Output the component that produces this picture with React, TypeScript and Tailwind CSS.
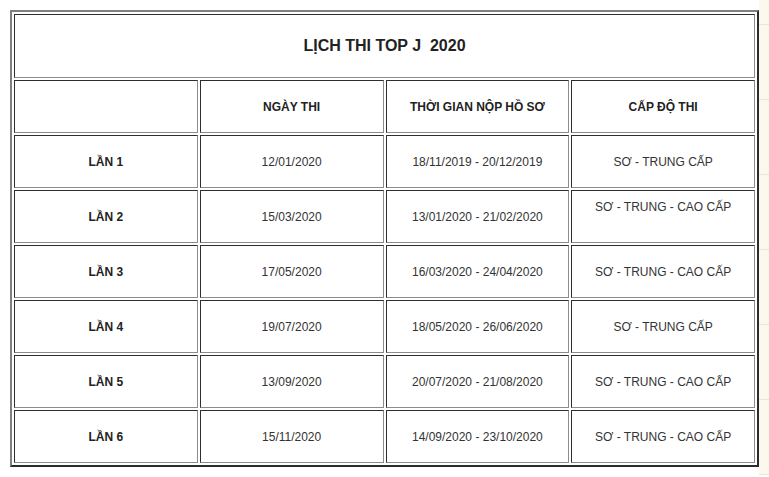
const rows = [
  { lan: "LẦN 1", ngay: "12/01/2020", hoso: "18/11/2019 - 20/12/2019", cap: "SƠ - TRUNG CẤP" },
  { lan: "LẦN 2", ngay: "15/03/2020", hoso: "13/01/2020 - 21/02/2020", cap: "SƠ - TRUNG - CAO CẤP", up: true },
  { lan: "LẦN 3", ngay: "17/05/2020", hoso: "16/03/2020 - 24/04/2020", cap: "SƠ - TRUNG - CAO CẤP" },
  { lan: "LẦN 4", ngay: "19/07/2020", hoso: "18/05/2020 - 26/06/2020", cap: "SƠ - TRUNG CẤP" },
  { lan: "LẦN 5", ngay: "13/09/2020", hoso: "20/07/2020 - 21/08/2020", cap: "SƠ - TRUNG - CAO CẤP" },
  { lan: "LẦN 6", ngay: "15/11/2020", hoso: "14/09/2020 - 23/10/2020", cap: "SƠ - TRUNG - CAO CẤP" },
];

const cell =
  "border border-t-[#2e2e2e] border-l-[#2e2e2e] border-b-[#8c8c8c] border-r-[#8c8c8c] text-center align-middle p-0";

export default function App() {
  return (
    <div
      className="flex w-[769px] h-[477px] bg-white text-[12px] text-[#333]"
      style={{ fontFamily: '"Liberation Sans", Arial, sans-serif' }}
    >
      <div className="flex-1 pl-[10px] pt-[10px]">
        <table className="w-[749px] table-fixed border-separate border-spacing-[2px] border-2 border-t-[#808080] border-l-[#808080] border-b-[#2b2b2b] border-r-[#2b2b2b]">
          <tbody>
            <tr>
              <td colSpan={4} className={`${cell} h-[64px] text-[16px] font-bold text-[#222]`}>
                LỊCH THI TOP J&nbsp; 2020
              </td>
            </tr>
            <tr className="font-bold text-[#222]">
              <td className={`${cell} h-[53px]`}></td>
              <td className={`${cell} h-[53px]`}>NGÀY THI</td>
              <td className={`${cell} h-[53px]`}>THỜI GIAN NỘP HỒ SƠ</td>
              <td className={`${cell} h-[53px]`}>CẤP ĐỘ THI</td>
            </tr>
            {rows.map((r) => (
              <tr key={r.lan}>
                <td className={`${cell} h-[53px] font-bold text-[#222]`}>{r.lan}</td>
                <td className={`${cell} h-[53px]`}>{r.ngay}</td>
                <td className={`${cell} h-[53px]`}>{r.hoso}</td>
                <td className={`${cell} h-[53px]`}>
                  <div className={r.up ? "pb-[20px]" : ""}>{r.cap}</div>
                </td>
              </tr>
            ))}
          </tbody>
        </table>
      </div>
      <div className="w-[10px] h-[475px] bg-[#fcf8eb] flex flex-col">
        <div className="h-[25px] border-b border-[#e9e5d8]"></div>
        <div className="h-[75px] border-b border-[#e9e5d8]"></div>
        <div className="h-[75px] border-b border-[#e9e5d8]"></div>
        <div className="h-[75px] border-b border-[#e9e5d8]"></div>
        <div className="h-[75px] border-b border-[#e9e5d8]"></div>
        <div className="h-[75px] border-b border-[#e9e5d8]"></div>
        <div className="h-[75px] border-b border-[#e9e5d8]"></div>
      </div>
    </div>
  );
}
